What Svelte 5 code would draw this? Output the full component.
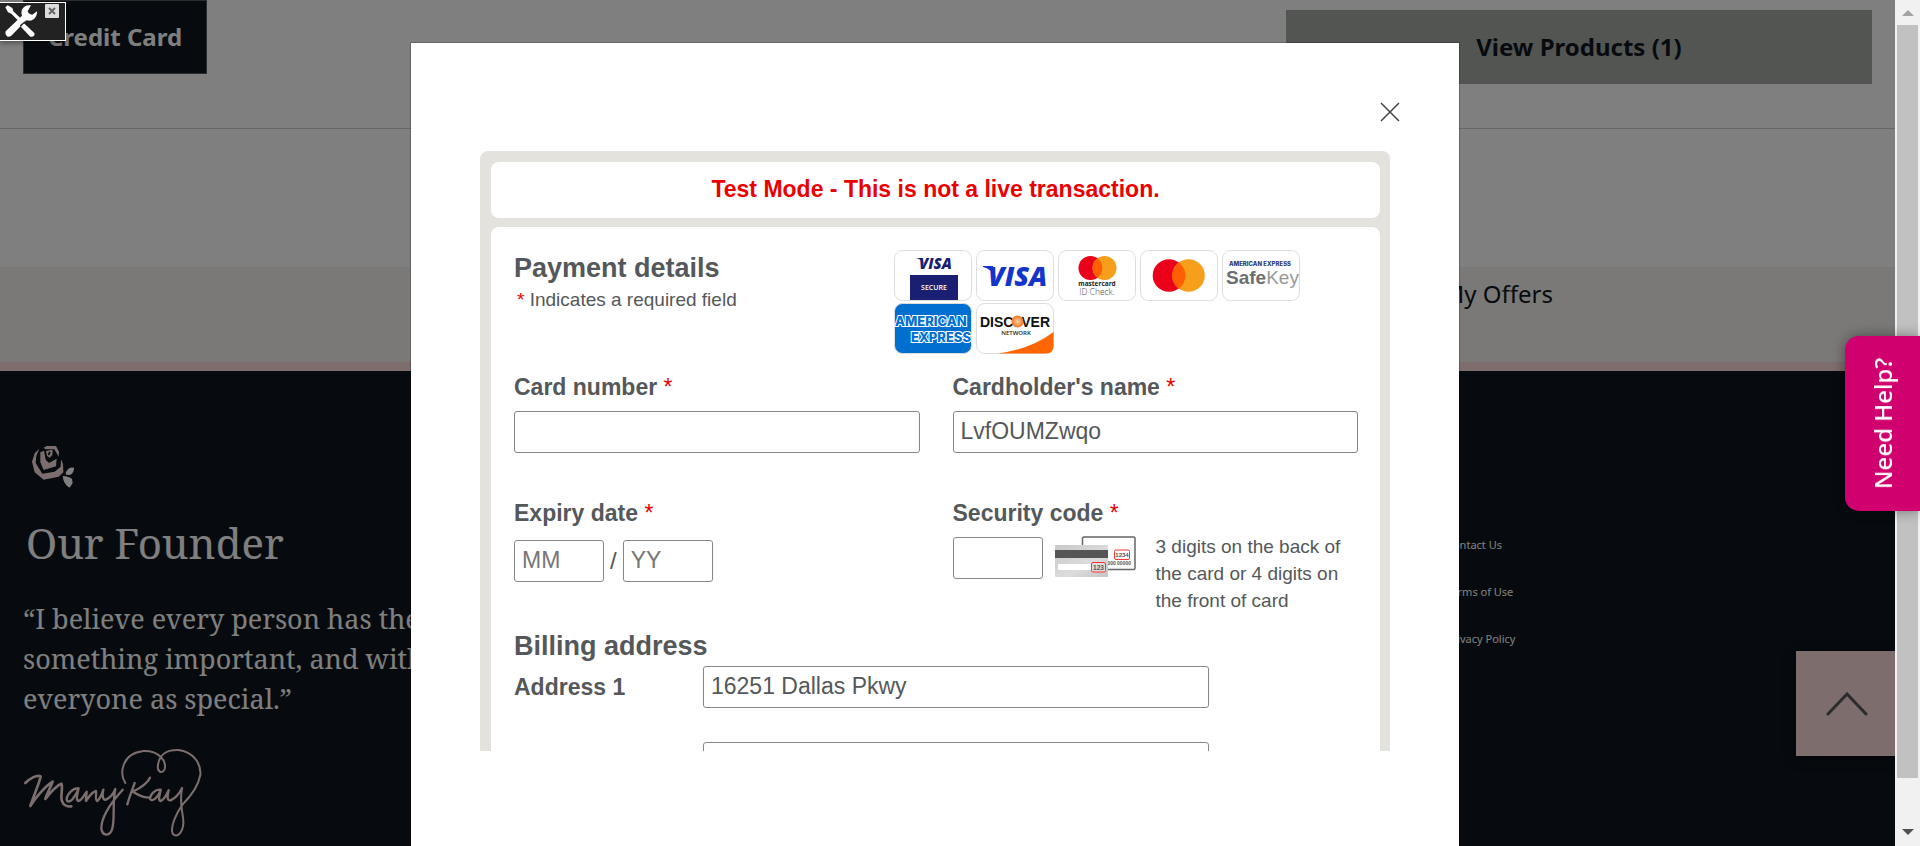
<script>
  let cardNumber = $state('');
  let cardholder = $state('LvfOUMZwqo');
  let month = $state('');
  let year = $state('');
  let code = $state('');
  let address1 = $state('16251 Dallas Pkwy');
  let address2 = $state('');
  const links = ['Contact Us', 'Terms of Use', 'Privacy Policy'];
</script>

<div class="page">
  <header class="top">
    <button class="credit">Credit Card</button>
    <button class="products">View Products (1)</button>
  </header>
  <div class="blank"></div>
  <section class="offers"><a href="#offers">My Offers</a></section>
  <footer>
    <div class="founder">
      <svg class="rose" viewBox="90 72 138 138" aria-hidden="true">
        <g fill="#f8dcdc">
          <path d="M118 86 104 100 96 125 104 157 131 179 176 170 190 157 189 132 183 118 182 140 164 155 127 161 107 129 109 107Z" />
          <path d="M130 84 140 78H168L177 95 176 110 163 88H138Z" />
          <path d="M121 97 132 92 137 119 147 129 170 116 168 139 131 150 121 127Z" />
          <path d="M138 93 158 89 157 105 149 113 141 108Z" />
        </g>
        <path d="M150 96 145 105" stroke="#0e161e" stroke-width="5" />
        <path fill="#fff" d="M197 158Q205 140 222 143 223 157 210 165L198 164ZM188 168Q207 169 216 177L218 189 209 203Q191 195 188 168Z" />
      </svg>
      <h2>Our Founder</h2>
      <p>“I believe every person has the<br />something important, and with<br />everyone as special.”</p>
      <svg class="signature" viewBox="66 980 546 273" role="img" aria-label="Signature">
        <g fill="none" stroke="#f8dcdc" stroke-width="6" stroke-linecap="round" stroke-linejoin="round">
          <path stroke-width="8" d="M76 1088C88 1076 110 1062 122 1068C120 1082 100 1130 91 1157C108 1130 138 1096 158 1084C150 1105 138 1125 136 1136C150 1118 168 1096 184 1090C190 1100 180 1130 186 1142C190 1154 202 1160 214 1158" />
          <path stroke-width="7" d="M236 1104C220 1102 202 1120 200 1136C200 1146 210 1146 218 1136C228 1122 234 1112 236 1104C232 1120 226 1140 236 1142C246 1140 252 1124 260 1114C260 1124 256 1140 258 1142C266 1130 276 1114 288 1112C290 1120 284 1140 292 1142C300 1136 306 1120 310 1108C306 1124 308 1140 318 1138C334 1130 342 1116 346 1106C336 1150 346 1200 336 1228C328 1250 306 1246 304 1224C304 1190 330 1150 368 1108" />
          <path d="M376 1088C358 1060 364 1000 430 992C475 990 500 1020 494 1046C488 1062 470 1056 474 1034C478 1000 505 988 535 989C580 994 604 1030 601 1064C594 1100 570 1130 548 1152C528 1180 510 1220 518 1240C528 1254 548 1240 550 1210C552 1180 536 1160 546 1104" />
          <path stroke-width="7" d="M404 1088C396 1110 388 1130 382 1152M450 1072C440 1092 415 1106 398 1114C408 1118 420 1132 450 1132M482 1108C466 1106 450 1122 450 1136C456 1146 472 1134 482 1110C478 1126 474 1140 482 1142C494 1138 500 1122 506 1110C502 1126 500 1142 512 1140C526 1134 540 1116 546 1104" />
        </g>
      </svg>
    </div>
    <nav>
      {#each links as link}<a href="#footer">{link}</a>{/each}
    </nav>
  </footer>
  <button class="to-top" aria-label="Back to top">
    <svg viewBox="0 0 42 24"><path d="M2 22 21 2 40 22" fill="none" stroke="#555a5a" stroke-width="3" stroke-linecap="round" /></svg>
  </button>
</div>

<div class="overlay">
  <div class="modal" role="dialog" aria-label="Payment">
    <button class="close" aria-label="Close">
      <svg viewBox="0 0 20 20"><path d="M1 1 19 19M19 1 1 19" stroke="#444" stroke-width="1.5" /></svg>
    </button>
    <div class="frame">
      <div class="panel notice">Test Mode - This is not a live transaction.</div>
      <form class="panel details">
        <div class="intro">
          <div>
            <h1>Payment details</h1>
            <p class="required"><b>*</b> Indicates a required field</p>
          </div>
          <div class="logos">
            <svg viewBox="0 0 78 51" role="img" aria-label="Visa Secure">
              <rect x=".5" y=".5" width="77" height="50" rx="8" fill="#fff" stroke="#ddd" />
              <g fill="#1a1f71"><text x="25" y="18.500" class="visa" font-size="15">VISA</text><path d="M22 8H28L30 14Q27 9 22 8ZM16 25H64V50H16Z" /></g>
              <text x="40" y="40" fill="#fff" font-size="7" font-weight="600" text-anchor="middle">SECURE</text>
            </svg>
            <svg viewBox="0 0 78 51" role="img" aria-label="Visa">
              <rect x=".5" y=".5" width="77" height="50" rx="8" fill="#fff" stroke="#ddd" />
              <g fill="#1434cb"><text x="12" y="35.500" class="visa" font-size="27">VISA</text><path d="M7 16H17L20 29Q15 18 7 17Z" /></g>
            </svg>
            <svg viewBox="0 0 78 51" role="img" aria-label="Mastercard ID Check">
              <rect x=".5" y=".5" width="77" height="50" rx="8" fill="#fff" stroke="#ddd" />
              <circle cx="32.500" cy="18" r="12" fill="#eb001b" /><circle cx="46.500" cy="18" r="12" fill="#f79e1b" /><path d="M39.500 8.300A12 12 0 0 1 39.500 27.700A12 12 0 0 1 39.500 8.300" fill="#ff5f00" />
              <text x="39" y="36" font-size="6.500" font-weight="700" text-anchor="middle" fill="#222">mastercard</text>
              <text x="39" y="45" font-size="8.500" font-weight="300" text-anchor="middle" fill="#444">ID Check.</text>
            </svg>
            <svg viewBox="0 0 78 51" role="img" aria-label="Mastercard">
              <rect x=".5" y=".5" width="77" height="50" rx="8" fill="#fff" stroke="#ddd" />
              <circle cx="29" cy="25.500" r="16.300" fill="#eb001b" /><circle cx="48.500" cy="25.500" r="16.300" fill="#f79e1b" /><path d="M38.800 12.400A16.300 16.300 0 0 1 38.800 38.600A16.300 16.300 0 0 1 38.800 12.400" fill="#ff5f00" />
            </svg>
            <svg viewBox="0 0 78 51" role="img" aria-label="American Express SafeKey">
              <rect x=".5" y=".5" width="77" height="50" rx="8" fill="#fff" stroke="#ddd" />
              <text x="38" y="16" font-size="6" font-weight="800" text-anchor="middle" fill="#2b3a72" font-family="Inter">AMERICAN EXPRESS</text>
              <text x="4" y="34" font-size="19" font-weight="700" fill="#6d6e71" font-family="Liberation Sans">Safe<tspan font-weight="400" fill="#999">Key</tspan></text>
            </svg>
            <svg viewBox="0 0 78 51" role="img" aria-label="American Express">
              <rect x=".5" y=".5" width="77" height="50" rx="8" fill="#016fd0" stroke="#ddd" />
              <g class="amex"><text x="1" y="22.500">AMERICAN</text><text x="77" y="39" text-anchor="end">EXPRESS</text></g>
            </svg>
            <svg viewBox="0 0 78 51" role="img" aria-label="Discover Network">
              <defs><radialGradient id="orb"><stop offset="0" stop-color="#ffd0a8" /><stop offset="1" stop-color="#f47216" /></radialGradient></defs>
              <rect x=".5" y=".5" width="77" height="50" rx="8" fill="#fff" stroke="#ddd" />
              <path d="M22 50.500Q55 46 77.500 29V43Q77.500 50.500 70 50.500Z" fill="#ff6600" />
              <g class="disc"><text x="4" y="24">DISC</text><text x="74" y="24" text-anchor="end">VER</text></g>
              <circle cx="41.500" cy="18.500" r="6" fill="url(#orb)" />
              <text x="40" y="31.500" font-size="6" font-weight="600" text-anchor="middle" fill="#222">NETWORK</text>
            </svg>
          </div>
        </div>

        <div class="fields">
          <div class="field">
            <label for="number">Card number <i>*</i></label>
            <input id="number" bind:value={cardNumber} />
          </div>
          <div class="field">
            <label for="holder">Cardholder's name <i>*</i></label>
            <input id="holder" bind:value={cardholder} />
          </div>
          <div class="field">
            <label for="month">Expiry date <i>*</i></label>
            <div class="expiry">
              <input id="month" class="short" placeholder="MM" bind:value={month} />
              <span>/</span>
              <input class="short" placeholder="YY" aria-label="Expiry year" bind:value={year} />
            </div>
          </div>
          <div class="field">
            <label for="code">Security code <i>*</i></label>
            <div class="security">
              <input id="code" class="short" bind:value={code} />
              <svg viewBox="0 0 81 42" aria-hidden="true">
                <defs><linearGradient id="plastic" x2="1" y2="1"><stop offset="0" stop-color="#c8c8c8" /><stop offset=".6" stop-color="#dcdcdc" /><stop offset="1" stop-color="#c4c4c4" /></linearGradient></defs>
                <rect x="27.500" y="1" width="52.500" height="32.500" rx="1.500" fill="#fff" stroke="#666" stroke-width="1.500" />
                <text x="76" y="29" font-size="5" font-weight="700" text-anchor="end" fill="#555">000 00000</text>
                <rect x="59.500" y="14" width="15" height="9.500" rx="1.500" fill="#fff" stroke="#f33" />
                <text x="67" y="21" font-size="6" font-weight="700" text-anchor="middle" fill="#555">1234</text>
                <rect y="9" width="53" height="32" rx="1" fill="url(#plastic)" /><path d="M0 14H53V22H0Z" fill="#555" />
                <rect x="3" y="28" width="35" height="6" rx="1" fill="#fff" />
                <rect x="36.500" y="26.500" width="14" height="9.500" rx="1.500" fill="#ddd" stroke="#f33" />
                <text x="43.500" y="33.500" font-size="6.500" font-weight="700" text-anchor="middle" fill="#555">123</text>
              </svg>
              <p>3 digits on the back of the card or 4 digits on the front of card</p>
            </div>
          </div>
        </div>

        <h1 class="billing">Billing address</h1>
        <div class="address">
          <label for="a1">Address 1</label>
          <input id="a1" bind:value={address1} />
          <input class="second" aria-label="Address 2" bind:value={address2} />
        </div>
      </form>
    </div>
  </div>
</div>

<div class="scrollbar" aria-hidden="true">
  <svg viewBox="0 0 12 6"><path d="M0 6 6 0 12 6Z" fill="#a3a3a3" /></svg>
  <div class="thumb"></div>
  <svg viewBox="0 0 12 6"><path d="M0 0 6 6 12 0Z" fill="#505050" /></svg>
</div>
<button class="help"><span>Need Help?</span></button>
<div class="tools">
  <button class="wrench" aria-label="Tools">
    <svg viewBox="0 0 96 96">
      <g fill="#fff">
        <path d="M1 7 8 1 22 9 25 19 50 43 43 50 19 26 9 22Z" />
        <path d="M56 54 88 84Q91 92 82 95H76L48 66Z" />
        <path d="M78 1Q60-2 52 12Q47 21 51 32L2 79Q-1 90 8 95Q14 96 19 92L64 46Q78 50 88 41Q97 33 96 19L82 29Q70 28 68 19Z" />
      </g>
      <path d="M46 62 60 51" stroke="#222" stroke-width="4" />
    </svg>
  </button>
  <button class="dismiss" aria-label="Hide tools"><svg viewBox="0 0 14 14"><path d="M4 4 10 10M10 4 4 10" stroke="#666" stroke-width="2" /></svg></button>
</div>

<style>
  :global(body) { overflow: hidden; }
  * { box-sizing: border-box; }
  button { font: inherit; border: 0; padding: 0; cursor: pointer; }
  svg { display: block; }
  .page { min-height: 100vh; display: flex; flex-direction: column; padding-right: 25px; background: #fff; color: #0e161e; font: 24px "Noto Sans", "Open Sans", sans-serif; }
  .top { height: 129px; flex: none; display: flex; justify-content: space-between; align-items: flex-start; padding: 0 23px; border-bottom: 1px solid #ccc; }
  .top button { height: 74px; padding-bottom: 2px; font-weight: 700; }
  .credit { width: 184px; background: #0e161e; border: 1px solid #555a5a; color: #fff; }
  .products { width: 31.7%; margin-top: 10px; background: #a7aaa7; color: #0e161e; }
  .blank { height: 138px; flex: none; }
  .offers { height: 104px; flex: none; padding: 10px 342px 0 0; background: #f4f3ee; border-bottom: 9px solid #fadada; text-align: right; }
  .offers a { color: inherit; text-decoration: none; }
  footer { flex: 1; display: flex; justify-content: space-between; padding: 73px 378px 8px 23px; background: #0e161e; color: #fff; }
  .founder { width: 600px; }
  .rose { width: 46px; height: 46px; margin-left: 7px; }
  h2 { margin: 27px 0 0 3px; font: 42px/52px "Noto Serif", "DejaVu Serif", serif; }
  .founder p { margin: 30px 0 0; white-space: nowrap; font: 27px/40px "Noto Serif", "DejaVu Serif", serif; }
  .signature { width: 182px; height: 91px; margin: 28px 0 0 -1px; }
  nav { display: flex; flex-direction: column; width: 71px; gap: 32px; padding-top: 93px; font-size: 11px; line-height: 15px; }
  nav a { color: inherit; text-decoration: none; white-space: nowrap; }
  .to-top { position: fixed; right: 25px; bottom: 90px; width: 99px; height: 105px; display: grid; place-items: center; padding-left: 2px; background: #fadada; box-shadow: 0 2px 10px #0008; }
  .to-top svg { width: 42px; height: 24px; }
  .overlay { position: fixed; inset: 0 25px 0 0; padding: 42px 25px 0 0; display: flex; justify-content: center; background: rgb(0 0 0 / 50%); }
  .modal { width: 1050px; max-width: 100%; height: 100vh; padding: 52px 69px; background: #fff; background-clip: padding-box; border: 1px solid rgb(0 0 0 / 20%); }
  .close { display: grid; place-items: center; width: 34px; height: 34px; margin: 0 -17px 22px auto; background: none; }
  .close svg { width: 20px; height: 20px; }
  .frame { height: 600px; overflow: hidden; padding: 11px 10px 0 11px; background: #e3e2dd; border-radius: 8px 8px 0 0; color: #54585a; font: 24px "Liberation Sans", Arial, sans-serif; }
  .panel { background: #fff; border-radius: 8px; }
  .notice { padding: 13px 0 15px; margin-bottom: 9px; text-align: center; font-size: 23px; line-height: 28px; font-weight: 700; color: #eb0000; }
  .details { padding: 23px 22px 23px 23px; min-height: 600px; }
  .intro { display: grid; grid-template-columns: 45% 1fr; }
  h1 { margin: 0; font-size: 27px; line-height: 36px; }
  .required { margin: 0; padding-left: 3px; font-size: 19px; line-height: 28px; }
  .required b, i { color: #eb0000; font-style: normal; font-weight: 400; }
  .logos { display: flex; flex-wrap: wrap; gap: 2px 4px; max-width: 420px; font-family: "Open Sans", sans-serif; }
  .logos svg { width: 78px; height: 51px; }
  .visa { font-family: "Open Sans", sans-serif; font-style: italic; font-weight: 800; }
  .amex { font: 800 13px Inter, sans-serif; fill: #016fd0; stroke: #fff; stroke-width: 2px; paint-order: stroke; }
  .disc { font: 700 14px "Liberation Sans", sans-serif; fill: #111; }
  .fields { display: grid; grid-template-columns: 1fr 1fr; column-gap: 33px; margin-top: 15px; }
  .field { min-height: 126px; }
  label { display: block; font-size: 23px; line-height: 36px; font-weight: 700; }
  input { display: block; width: 100%; height: 42px; margin: 0; padding: 0 7px 2px; border: 1px solid #888; border-radius: 3px; background: #fff; color: #54585a; font: 23px "Liberation Sans", Arial, sans-serif; }
  input::placeholder { color: #777; }
  .field > input { margin-top: 6px; }
  .short { width: 90px; flex: none; }
  .expiry { display: flex; align-items: center; gap: 6px; padding-top: 9px; }
  .security { display: flex; align-items: flex-start; padding-top: 6px; }
  .security svg { width: 81px; height: 42px; margin: -1px 20px 0 12px; font-family: "Liberation Sans", sans-serif; flex: none; }
  .security p { margin: -4px 0 0; font-size: 19px; line-height: 27px; }
  .billing { margin-top: 11px; line-height: 28px; }
  .address { display: grid; grid-template-columns: 189px 60%; row-gap: 34px; padding-top: 6px; align-items: center; }
  .second { grid-column: 2; }
  .scrollbar { position: fixed; inset: 0 0 0 auto; width: 25px; display: flex; flex-direction: column; align-items: center; justify-content: space-between; padding: 10px 0 11px; background: #f1f1f1; }
  .scrollbar svg { width: 12px; height: 6px; }
  .thumb { width: 21px; flex: 1; margin: 9px 0 51px; background: #c1c1c1; }
  .help { position: fixed; right: 0; top: 336px; width: 75px; height: 175px; display: grid; place-items: center; background: #d1006f; color: #fff; border-radius: 14px 0 0 14px; box-shadow: 0 0 14px #0006; font: 500 24px "Noto Sans", "Open Sans", sans-serif; }
  .help span { writing-mode: vertical-rl; rotate: 180deg; }
  .tools { position: fixed; left: 0; top: 2px; width: 66px; height: 39px; display: flex; gap: 8px; padding: 1px 0 0 5px; background: #222; border: 1px solid #fff; border-left: 0; box-shadow: 0 2px 5px #0006; }
  .wrench { background: none; width: 32px; height: 32px; margin-top: 1px; }
  .dismiss { width: 14px; height: 14px; background: #ddd; border-radius: 1px; }
</style>
